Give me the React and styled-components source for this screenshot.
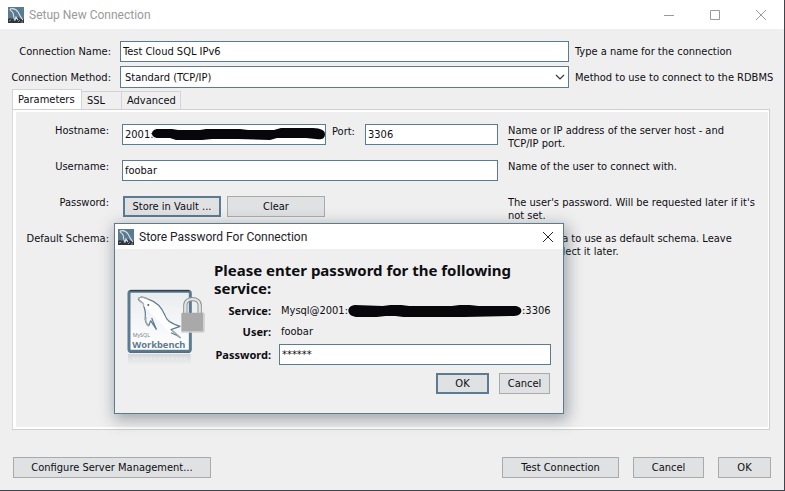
import React from "react";
import styled, { createGlobalStyle, css } from "styled-components";

const steel = "#5b7b90";

const GlobalStyle = createGlobalStyle`
  * { box-sizing: border-box; }
  body {
    margin: 0;
    background: #efefef;
    color: #0d0d12;
    font: 11px/13px "DejaVu Sans Condensed", "Noto Sans", sans-serif;
  }
`;

const Window = styled.main`
  position: relative;
  display: flex;
  flex-direction: column;
  min-width: 785px;
  min-height: 100vh;
  background: #efefef;
  border: solid #42424e;
  border-width: 0 1px 1px 0;
`;

const TitleBar = styled.header`
  display: flex;
  align-items: center;
  gap: 5px;
  height: ${(p) => (p.$active ? 25 : 29)}px;
  padding: 0 ${(p) => (p.$active ? 2 : 10)}px 0 ${(p) => (p.$active ? 3 : 8)}px;
  background: #fff;
  color: ${(p) => (p.$active ? "#22222a" : "#9a9a9a")};
`;

const Title = styled.h1`
  flex: 1;
  margin: 0;
  font: 400 12px/16px Roboto, sans-serif;
`;

const WindowButtons = styled.div`
  display: flex;
  gap: 20px;
`;

const IconButton = styled.button`
  display: grid;
  place-items: center;
  width: 26px;
  height: 24px;
  padding: 0;
  border: 0;
  background: none;
  color: inherit;
`;

const ConnectionForm = styled.div`
  display: grid;
  grid-template-columns: 99px minmax(0, 1fr) 204px;
  align-items: center;
  column-gap: 6px;
  row-gap: 4px;
  padding: 12px 5px 1px 12px;
`;

const Label = styled.label`
  display: flex;
  justify-content: flex-end;
  white-space: nowrap;
  ${(p) => p.$bold && css`font-family: "Noto Sans", sans-serif; font-weight: 700;`}
`;

const PanelLabel = styled(Label)`
  padding-right: 3px;
`;

const boxed = css`
  width: 100%;
  height: 21px;
  border: 1px solid ${steel};
  border-radius: 0;
  background: #fff;
  color: inherit;
  font: inherit;
  outline: 0;
`;

const TextInput = styled.input`
  ${boxed}
  padding: 0 2px;
`;

const FieldSlot = styled.div`
  position: relative;
  padding-left: 3px;
`;

const Select = styled.select`
  ${boxed}
  display: block;
  height: 22px;
  padding: 0 4px;
  appearance: none;
`;

const Chevron = styled.svg`
  position: absolute;
  right: 4px;
  top: 8px;
  pointer-events: none;
`;

const TabList = styled.div`
  display: flex;
  align-items: flex-end;
  height: 20px;
  margin: 0 14px 0 12px;
`;

const Tab = styled.button`
  height: ${(p) => (p.$selected ? 20 : 18)}px;
  width: ${(p) => p.$width}px;
  padding: 0 0 1px 5px;
  border: 1px solid #d4d4d4;
  border-left-width: ${(p) => (p.$selected ? 1 : 0)}px;
  border-bottom: 0;
  background: ${(p) => (p.$selected ? "#fff" : "#efefef")};
  color: inherit;
  font: inherit;
  text-align: left;
`;

const Panel = styled.section`
  flex: 1;
  display: grid;
  grid-template-columns: 99px 376px 248px;
  grid-auto-rows: 36px;
  align-content: start;
  column-gap: 10px;
  margin: 0 14px 27px 12px;
  padding: 14px 0 0;
  border: 1px solid #cfcfcf;
  border-left-color: #dadada;
  box-shadow: inset 3px 2px #fff, inset -1px -2px #fff;
`;

const Controls = styled.div`
  display: flex;
  align-items: flex-start;
  padding: ${(p) => (p.$inset ? "0 0 0 1px" : 0)};
  gap: 6px;
`;

const HostBox = styled.div`
  position: relative;
  flex: none;
  width: 204px;
`;

const PortLabel = styled(Label)`
  width: 27px;
  padding-top: 1px;
  justify-content: flex-start;
`;

const PortInput = styled(TextInput)`
  width: 133px;
`;

const HostMark = styled.svg`
  position: absolute;
  left: 30px;
  top: 3px;
`;

const Button = styled.button`
  flex: none;
  width: ${(p) => p.$width}px;
  height: 21px;
  padding: 0;
  border: ${(p) => (p.$primary ? `2px solid ${steel}` : "1px solid #a9abab")};
  border-radius: 0;
  background: #dfe1e3;
  color: inherit;
  font: inherit;
`;

const Hint = styled.p`
  margin: 0;
`;

const Footer = styled.footer`
  display: flex;
  gap: 14px;
  padding: 0 13px 12px;
`;

const Spacer = styled.span`
  flex: 1;
`;

const Dialog = styled.section`
  position: absolute;
  left: 114px;
  top: 223px;
  width: 450px;
  border: 1px solid ${steel};
  background: #efefef;
  box-shadow: 2px 4px 14px 2px rgba(60, 70, 80, 0.42);
`;

const DialogBody = styled.div`
  display: grid;
  grid-template-columns: 79px 1fr;
  column-gap: 8px;
  padding: 12px 12px 19px 12px;
`;

const LogoCell = styled.div`
  padding-top: 28px;
`;

const Prompt = styled.h2`
  margin: 0 0 3px;
  font-family: "Noto Sans", sans-serif;
  font-size: 15px;
  line-height: 18px;
  font-weight: 700;
`;

const Credentials = styled.div`
  display: grid;
  grid-template-columns: 57px minmax(0, 1fr);
  grid-template-rows: 20px 20px 25px;
  row-gap: 1px;
  column-gap: 8px;
  align-items: center;
`;

const Value = styled.output`
  display: flex;
  align-items: center;
  padding-left: 2px;
`;

const DialogActions = styled.div`
  display: flex;
  justify-content: flex-end;
  gap: 10px;
  padding: 6px 1px 0 0;
`;

function AppIcon() {
  return (
    <svg width="16" height="16" viewBox="0 0 16 16" aria-hidden="true">
      <path fill="#5b7b90" d="M0 0h16v16H0z" />
      <path fill="#30343c" d="M0 12l2-1 2 1 2-2 2 2 2-2 2 2 2-1 2 1v4H0z" />
      <path fill="none" stroke="#dce3e6" strokeWidth="1.1" d="M2 2c3-1 6 0 8 3s2 5 5 8M2 2c0 2 2 2 3 4s0 5 2 7l1-3 2 3" />
      <path fill="none" stroke="#aab4b9" strokeWidth=".8" d="M1 14l2-1m3 1l1-2m3 3l2-2m1 2h2" />
    </svg>
  );
}

function CloseIcon() {
  return (
    <svg width="12" height="12" viewBox="0 0 12 12" fill="none" stroke="currentColor" aria-hidden="true">
      <path d="M1 1l10 10M11 1L1 11" />
    </svg>
  );
}

function WorkbenchLogo() {
  return (
    <svg width="79" height="78" viewBox="21 27 237 234" role="img" aria-label="MySQL Workbench">
      <defs>
        <linearGradient id="plate" x1="0" y1="0" x2="0" y2="1">
          <stop offset="0" stopColor="#e9ecee" />
          <stop offset="1" stopColor="#fff" />
        </linearGradient>
        <linearGradient id="mirror" x1="0" y1="0" x2="0" y2="1">
          <stop offset="0" stopColor="#d3d7d9" />
          <stop offset="1" stopColor="#efefef" />
        </linearGradient>
      </defs>
      <path fill="url(#mirror)" d="M24 222h188v32H24z" />
      <path stroke="#e6e8e9" strokeWidth="9" strokeDasharray="9 4" d="M36 236h166" />
      <rect x="27" y="34" width="184" height="180" rx="6" fill="url(#plate)" stroke="#5b7b90" strokeWidth="9" />
      <path stroke="#343f48" strokeWidth="4" d="M30 32h178" />
      <path stroke="#4c687b" strokeWidth="3" d="M28 217h182" />
      <path
        fill="#fff"
        stroke="#5b7b90"
        strokeWidth="3.5"
        strokeLinejoin="round"
        d="M55 56c5-7 18-5 31 2 26 8 40 26 49 48 6 17 16 21 29 27l16 6-27 10 28 24c-8-6-18-11-28-15"
      />
      <path
        fill="none"
        stroke="#5b7b90"
        strokeWidth="3.5"
        strokeLinejoin="round"
        d="M55 56c0 8 10 8 14 16 5 12 8 22 7 35-2 12-1 22 10 30l6-15 17 26-14-34"
      />
      <path stroke="#fff" strokeWidth="7" d="M65 66l82 84" />
      <path fill="none" stroke="#a9abab" strokeWidth="4" d="M55 56c6-8 20-4 32 3M57 58c2 8 11 7 15 16M78 111c-2 12-1 20 7 27M155 150l26 23" />
      <circle cx="85" cy="75" r="3" fill="#455f70" />
      <text x="38" y="172" fill="#737b80" fontFamily="Open Sans" fontSize="16">MySQL</text>
      <text x="37" y="204" fill="#5b7b90" fontFamily="Noto Sans" fontWeight="700" fontSize="28">Workbench</text>
      <path fill="none" stroke="#8c9192" strokeWidth="13" d="M196 99V76c0-25 43-25 43 0v23" />
      <path fill="none" stroke="#e4e6e6" strokeWidth="7" d="M196 99V76c0-25 43-25 43 0v23" />
      <rect x="184" y="98" width="69" height="57" rx="3" fill="#a9a9a9" />
      <path stroke="#cfd1d1" strokeWidth="4" d="M251 99v56M184 156h68" />
    </svg>
  );
}

export default function App() {
  return (
    <>
      <GlobalStyle />
      <Window>
        <TitleBar>
          <AppIcon />
          <Title>Setup New Connection</Title>
          <WindowButtons>
            <IconButton aria-label="Minimize">
              <svg width="12" height="12" viewBox="0 0 12 12" aria-hidden="true">
                <path stroke="currentColor" d="M1 6.5h10" />
              </svg>
            </IconButton>
            <IconButton aria-label="Maximize">
              <svg width="12" height="12" viewBox="0 0 12 12" aria-hidden="true">
                <path fill="none" stroke="currentColor" d="M1.5 1.5h9v9h-9z" />
              </svg>
            </IconButton>
            <IconButton aria-label="Close"><CloseIcon /></IconButton>
          </WindowButtons>
        </TitleBar>

        <ConnectionForm>
          <Label htmlFor="name">Connection Name:</Label>
          <FieldSlot><TextInput id="name" defaultValue="Test Cloud SQL IPv6" /></FieldSlot>
          <Hint>Type a name for the connection</Hint>
          <Label htmlFor="method">Connection Method:</Label>
          <FieldSlot>
            <Select id="method">
              <option>Standard (TCP/IP)</option>
            </Select>
            <Chevron width="10" height="7" viewBox="0 0 10 7" aria-hidden="true">
              <path fill="none" stroke="#33373c" strokeWidth="1.2" d="M1 1l4 4 4-4" />
            </Chevron>
          </FieldSlot>
          <Hint>Method to use to connect to the RDBMS</Hint>
        </ConnectionForm>

        <TabList role="tablist">
          <Tab role="tab" aria-selected="true" $selected $width={70}>Parameters</Tab>
          <Tab role="tab" aria-selected="false" $width={40}>SSL</Tab>
          <Tab role="tab" aria-selected="false" $width={59}>Advanced</Tab>
        </TabList>
        <Panel role="tabpanel">
          <PanelLabel htmlFor="host">Hostname:</PanelLabel>
          <Controls>
            <HostBox>
              <TextInput id="host" defaultValue="2001:" />
              <HostMark width="174" height="14" viewBox="0 0 174 14" aria-hidden="true">
                <path fill="#07060b" d="M6 2h14l6 1h22l6-1h34l8 1h26l7-2h29c8 0 15 1 15 6s-4 6-9 5l-10-1h-29l-7 2-32-1H60l-10 1H24l-6-2H6C-2 11-2 2 6 2z" />
              </HostMark>
            </HostBox>
            <PortLabel htmlFor="port">Port:</PortLabel>
            <PortInput id="port" defaultValue="3306" />
          </Controls>
          <Hint>Name or IP address of the server host - and TCP/IP port.</Hint>

          <PanelLabel htmlFor="user">Username:</PanelLabel>
          <Controls><TextInput id="user" defaultValue="foobar" /></Controls>
          <Hint>Name of the user to connect with.</Hint>

          <PanelLabel as="span">Password:</PanelLabel>
          <Controls $inset>
            <Button $primary $width={98}>Store in Vault ...</Button>
            <Button $width={98}>Clear</Button>
          </Controls>
          <Hint>The user's password. Will be requested later if it's not set.</Hint>

          <PanelLabel htmlFor="schema">Default Schema:</PanelLabel>
          <Controls><TextInput id="schema" /></Controls>
          <Hint>The schema to use as default schema. Leave blank to select it later.</Hint>
        </Panel>

        <Footer>
          <Button $width={198}>Configure Server Management...</Button>
          <Spacer />
          <Button $width={117}>Test Connection</Button>
          <Button $width={71}>Cancel</Button>
          <Button $width={53}>OK</Button>
        </Footer>

        <Dialog role="dialog" aria-labelledby="dialog-title">
          <TitleBar $active>
            <AppIcon />
            <Title as="h2" id="dialog-title">Store Password For Connection</Title>
            <IconButton aria-label="Close dialog"><CloseIcon /></IconButton>
          </TitleBar>
          <DialogBody>
            <LogoCell><WorkbenchLogo /></LogoCell>
            <div>
              <Prompt>Please enter password for the following service:</Prompt>
              <Credentials>
                <Label $bold htmlFor="service">Service:</Label>
                <Value id="service">
                  Mysql@2001:
                  <svg width="174" height="13" viewBox="0 0 176 13" aria-hidden="true">
                    <path fill="#07060b" d="M7 1l28 1 8-1h11l8 1h43l8-1h10l9 1h35c11-1 11 10 1 10l-50 1H56l-8-1H38l-9 1H8C-2 12-2 2 7 1z" />
                  </svg>
                  :3306
                </Value>
                <Label $bold htmlFor="account">User:</Label>
                <Value id="account">foobar</Value>
                <Label $bold htmlFor="password">Password:</Label>
                <TextInput id="password" autoComplete="off" defaultValue="******" />
              </Credentials>
              <DialogActions>
                <Button $primary $width={53}>OK</Button>
                <Button $width={51}>Cancel</Button>
              </DialogActions>
            </div>
          </DialogBody>
        </Dialog>
      </Window>
    </>
  );
}
